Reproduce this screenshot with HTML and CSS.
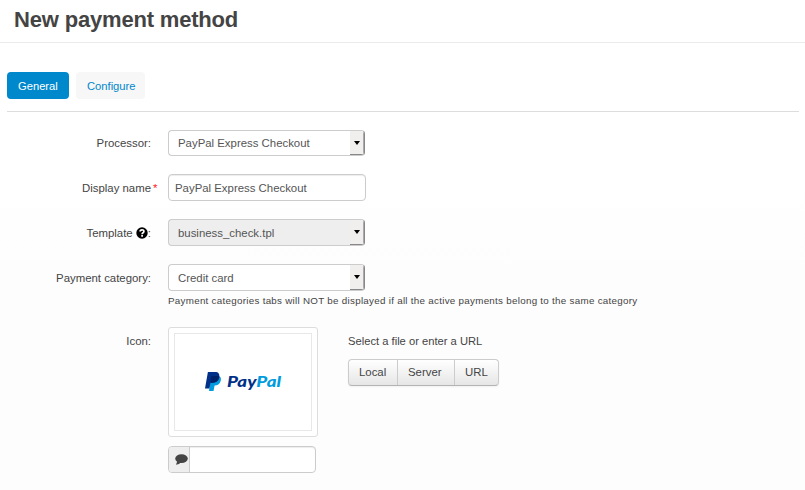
FILE: index.html
```html
<!DOCTYPE html>
<html lang="en">
<head>
<meta charset="utf-8">
<title>New payment method</title>
<link rel="stylesheet" href="styles.css">
</head>
<body>
<header class="title-bar"><h1>New payment method</h1></header>
<main class="content">
  <nav class="tabs">
    <a class="tab active">General</a>
    <a class="tab">Configure</a>
  </nav>
  <form class="form">
    <div class="row row-first">
      <label class="label">Processor:</label>
      <div class="select"><span>PayPal Express Checkout</span><i class="arrow"></i></div>
    </div>
    <div class="row">
      <label class="label required">Display name</label>
      <div class="input">PayPal Express Checkout</div>
    </div>
    <div class="row">
      <label class="label">Template
        <svg class="help" viewBox="0 0 12 12"><circle cx="6" cy="6" r="5.7"/><path d="M4.1 4.6C4.1 2.2 8 2.2 7.9 4.5C7.9 5.8 6.1 5.7 6.1 7.2M6.1 8.1V9.7" fill="none" stroke="#fff" stroke-width="1.7"/></svg>:</label>
      <div class="select disabled"><span>business_check.tpl</span><i class="arrow"></i></div>
    </div>
    <div class="row row-help">
      <label class="label">Payment category:</label>
      <div class="field">
        <div class="select"><span>Credit card</span><i class="arrow"></i></div>
        <p class="hint">Payment categories tabs will NOT be displayed if all the active payments belong to the same category</p>
      </div>
    </div>
    <div class="row">
      <label class="label">Icon:</label>
      <div class="icon-column">
        <div class="thumb"><div class="thumb-inner">
          <svg class="logo" viewBox="0 0 78 22">
            <path d="M6 5H12.5C16 5 16.6 8 15.5 10.5C14.6 13.3 12.5 14.4 9.6 14.4L8.5 20H4Z" fill="#009cde"/>
            <path d="M2.9 1H10C13.6 1 14.9 3 14.2 6.5C13.5 10 11 11.7 7.2 11.7H5.5L4.4 17.4H0Z" fill="#003087"/>
            <path d="M6.3 5H12.5C13.4 5 14 5.2 14.4 5.5C13.9 9.6 11.4 11.7 7.2 11.7H5.5Z" fill="#012169"/>
            <text class="wordmark" x="22" y="16.3" textLength="54" lengthAdjust="spacingAndGlyphs"><tspan fill="#003087">Pay</tspan><tspan fill="#009cde">Pal</tspan></text>
          </svg>
        </div></div>
        <div class="comment"><span class="addon"><svg viewBox="0 0 13 11"><ellipse cx="6.5" cy="4.6" rx="6.3" ry="4.3"/><path d="M2.3 7L1 10.7Q4.5 10.5 6 8.2Z"/></svg></span></div>
      </div>
      <div class="upload">
        <p>Select a file or enter a URL</p>
        <div class="buttons"><span>Local</span><span>Server</span><span>URL</span></div>
      </div>
    </div>
  </form>
</main>
</body>
</html>
```
FILE: styles.css
```css
* { box-sizing: border-box; }
body {
  margin: 0;
  height: 490px;
  overflow: hidden;
  background: linear-gradient(#fff 0, #fff 180px, #fdfdfd 280px, #fdfdfd 100%);
  color: #444;
  font: 11.4px/18px "Liberation Sans", Arial, sans-serif;
}
.title-bar { height: 43px; padding-left: 14px; border-bottom: 1px solid #ebebeb; background: #fff; }
h1 { margin: 0; font-size: 22px; line-height: 40px; letter-spacing: -.18px; }
.content { padding: 29px 6px 0 7px; }
.tabs { display: flex; gap: 7px; height: 40px; border-bottom: 1px solid #ddd; font-size: 11.2px; }
.tab { width: 69px; height: 27px; padding-left: 11px; border-radius: 4px; background: #f7f7f7; color: #08c; line-height: 28px; }
.tab.active { width: 62px; background: #08c; color: #fff; }
.row { display: flex; align-items: flex-start; margin-bottom: 18px; }
.form { padding-top: 18px; }
.row-help { margin-bottom: 17px; }
.label { width: 144px; height: 26px; margin-right: 17px; line-height: 28px; text-align: right; }
.required { position: relative; }
.required::after { content: "*"; position: absolute; left: 146px; color: #f22; }
.help { width: 12px; height: 12px; vertical-align: -2px; fill: #000; }
.select, .input {
  display: flex;
  height: 27px;
  border: 1px solid #ccc;
  border-radius: 4px;
  background: #fff;
  color: #555;
  line-height: 26px;
}
.row-first .select { height: 26px; line-height: 25px; }
.row-first .label { line-height: 26px; }
.select { width: 197px; justify-content: space-between; padding-left: 9px; border-right-color: #888; overflow: hidden; }
.input { width: 198px; padding-left: 6px; box-shadow: inset 0 1px 1px rgba(0, 0, 0, .075); }
.disabled { background: #eee; }
.arrow { display: flex; width: 14px; align-items: center; justify-content: center; background: #f0efed; border-right: 1px solid #aaa; border-bottom: 1px solid #888; }
.arrow::after { content: ""; margin-left: 1px; border: 3.5px solid transparent; border-top: 4px solid #000; border-bottom: 0; }
.hint { margin: 1px 0 0; font-size: 9.8px; letter-spacing: .28px; white-space: nowrap; }
.thumb { width: 150px; height: 110px; padding: 5px; border: 1px solid #ddd; border-radius: 3px; background: #fff; }
.thumb-inner { height: 98px; border: 1px solid #e8e8e8; padding: 37px 0 0 30px; }
.logo { display: block; width: 78px; height: 22px; }
.wordmark { font: italic 900 15px Lato, sans-serif; }
.comment { display: flex; width: 148px; height: 27px; margin-top: 9px; border: 1px solid #ccc; border-radius: 4px; background: #fff; box-shadow: inset 0 1px 1px rgba(0, 0, 0, .075); overflow: hidden; }
.addon { width: 21px; padding: 7px 0 0 6px; background: #eee; border-right: 1px solid #ccc; }
.addon svg { display: block; width: 13px; height: 11px; fill: #444; }
.upload { margin-left: 30px; }
.upload p { margin: 5px 0 9px; font-size: 11.2px; }
.buttons { display: flex; width: 151px; height: 27px; border: 1px solid #ccc; border-bottom-color: #b3b3b3; border-radius: 4px; background: linear-gradient(#fff, #e6e6e6); box-shadow: 0 1px 2px rgba(0, 0, 0, .05); line-height: 25px; }
.buttons span { padding-left: 10px; border-left: 1px solid #ccc; width: 57px; }
.buttons span:first-child { border-left: 0; width: 48px; }
.buttons span:last-child { width: 44px; }
```
